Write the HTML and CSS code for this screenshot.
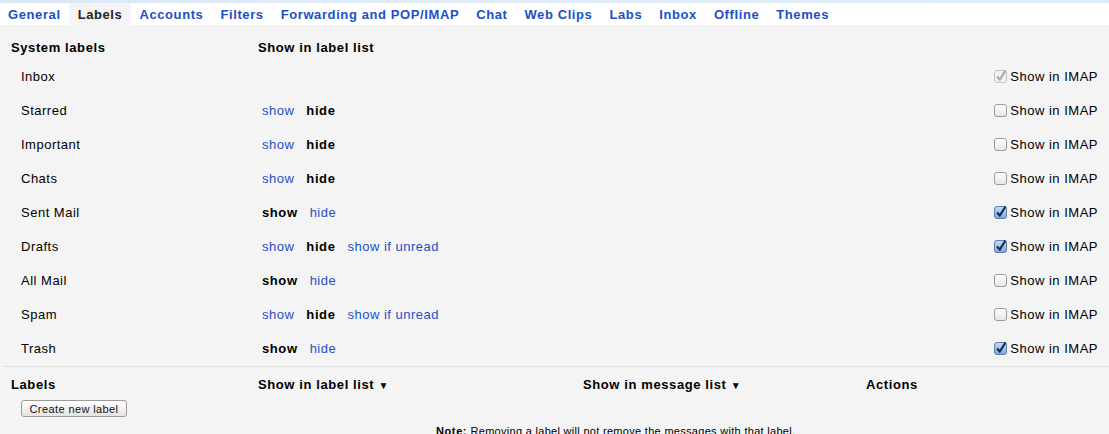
FILE: index.html
```html
<!DOCTYPE html>
<html>
<head>
<meta charset="utf-8">
<link rel="stylesheet" href="styles.css">
</head>
<body>
<div class="stripe"></div>
<nav class="tabs">
  <a class="tab">General</a>
  <a class="tab active">Labels</a>
  <a class="tab">Accounts</a>
  <a class="tab">Filters</a>
  <a class="tab">Forwarding and POP/IMAP</a>
  <a class="tab">Chat</a>
  <a class="tab">Web Clips</a>
  <a class="tab">Labs</a>
  <a class="tab">Inbox</a>
  <a class="tab">Offline</a>
  <a class="tab">Themes</a>
</nav>
<main class="content">
  <table class="sys">
    <colgroup><col class="c1"><col class="c2"><col class="c3"></colgroup>
    <tr class="head">
      <th>System labels</th>
      <th>Show in label list</th>
      <th></th>
    </tr>
    <tr>
      <td class="name">Inbox</td>
      <td class="opts"></td>
      <td class="imap"><span class="cb disabled"><svg width="14" height="14" viewBox="0 0 14 14"><rect x="0.5" y="1.5" width="12" height="12" rx="2.5" fill="#f2f2f2" stroke="#c4c4c4"/><path d="M3 7.5 L5.8 10.5 L11.5 1.5" fill="none" stroke="#a9a9a9" stroke-width="2.2"/></svg></span>Show in IMAP</td>
    </tr>
    <tr>
      <td class="name">Starred</td>
      <td class="opts"><a class="lnk">show</a><b class="cur">hide</b></td>
      <td class="imap"><span class="cb"><svg width="14" height="14" viewBox="0 0 14 14"><defs><linearGradient id="g1" x1="0" y1="0" x2="0" y2="1"><stop offset="0" stop-color="#ffffff"/><stop offset="1" stop-color="#e6e6e6"/></linearGradient></defs><rect x="0.5" y="1.5" width="12" height="12" rx="2.5" fill="url(#g1)" stroke="#9a9a9a"/></svg></span>Show in IMAP</td>
    </tr>
    <tr>
      <td class="name">Important</td>
      <td class="opts"><a class="lnk">show</a><b class="cur">hide</b></td>
      <td class="imap"><span class="cb"><svg width="14" height="14" viewBox="0 0 14 14"><rect x="0.5" y="1.5" width="12" height="12" rx="2.5" fill="url(#g1)" stroke="#9a9a9a"/></svg></span>Show in IMAP</td>
    </tr>
    <tr>
      <td class="name">Chats</td>
      <td class="opts"><a class="lnk">show</a><b class="cur">hide</b></td>
      <td class="imap"><span class="cb"><svg width="14" height="14" viewBox="0 0 14 14"><rect x="0.5" y="1.5" width="12" height="12" rx="2.5" fill="url(#g1)" stroke="#9a9a9a"/></svg></span>Show in IMAP</td>
    </tr>
    <tr>
      <td class="name">Sent Mail</td>
      <td class="opts"><b class="cur">show</b><a class="lnk">hide</a></td>
      <td class="imap"><span class="cb"><svg width="14" height="14" viewBox="0 0 14 14"><defs><linearGradient id="g2" x1="0" y1="0" x2="0" y2="1"><stop offset="0" stop-color="#c9dcf5"/><stop offset="1" stop-color="#7fa6dc"/></linearGradient></defs><rect x="0.5" y="1.5" width="12" height="12" rx="2.5" fill="url(#g2)" stroke="#5b7fae"/><path d="M3 7.5 L5.8 10.5 L11.5 1.5" fill="none" stroke="#1b2a4a" stroke-width="2.2"/></svg></span>Show in IMAP</td>
    </tr>
    <tr>
      <td class="name">Drafts</td>
      <td class="opts"><a class="lnk">show</a><b class="cur">hide</b><a class="lnk">show if unread</a></td>
      <td class="imap"><span class="cb"><svg width="14" height="14" viewBox="0 0 14 14"><rect x="0.5" y="1.5" width="12" height="12" rx="2.5" fill="url(#g2)" stroke="#5b7fae"/><path d="M3 7.5 L5.8 10.5 L11.5 1.5" fill="none" stroke="#1b2a4a" stroke-width="2.2"/></svg></span>Show in IMAP</td>
    </tr>
    <tr>
      <td class="name">All Mail</td>
      <td class="opts"><b class="cur">show</b><a class="lnk">hide</a></td>
      <td class="imap"><span class="cb"><svg width="14" height="14" viewBox="0 0 14 14"><rect x="0.5" y="1.5" width="12" height="12" rx="2.5" fill="url(#g1)" stroke="#9a9a9a"/></svg></span>Show in IMAP</td>
    </tr>
    <tr>
      <td class="name">Spam</td>
      <td class="opts"><a class="lnk">show</a><b class="cur">hide</b><a class="lnk">show if unread</a></td>
      <td class="imap"><span class="cb"><svg width="14" height="14" viewBox="0 0 14 14"><rect x="0.5" y="1.5" width="12" height="12" rx="2.5" fill="url(#g1)" stroke="#9a9a9a"/></svg></span>Show in IMAP</td>
    </tr>
    <tr>
      <td class="name">Trash</td>
      <td class="opts"><b class="cur">show</b><a class="lnk">hide</a></td>
      <td class="imap"><span class="cb"><svg width="14" height="14" viewBox="0 0 14 14"><rect x="0.5" y="1.5" width="12" height="12" rx="2.5" fill="url(#g2)" stroke="#5b7fae"/><path d="M3 7.5 L5.8 10.5 L11.5 1.5" fill="none" stroke="#1b2a4a" stroke-width="2.2"/></svg></span>Show in IMAP</td>
    </tr>
  </table>
  <section class="user">
    <div class="uhead">
      <span class="h1">Labels</span>
      <span class="h2">Show in label list <span class="arr">▼</span></span>
      <span class="h3">Show in message list <span class="arr">▼</span></span>
      <span class="h4">Actions</span>
    </div>
    <div class="btnrow"><button class="btn">Create new label</button></div>
    <p class="note"><b>Note:</b> Removing a label will not remove the messages with that label.</p>
  </section>
</main>
</body>
</html>
```

FILE: styles.css
```css
html, body {
  margin: 0;
  padding: 0;
  background: #f4f4f4;
  font-family: "Liberation Sans", Arial, sans-serif;
  font-size: 13px;
  letter-spacing: 0.5px;
  color: #000;
  overflow: hidden;
}
b, th, .tab, .uhead { letter-spacing: 0.6px; }
.stripe {
  height: 3px;
  background: linear-gradient(to right, #dbe9f6, #e3eef8 60%, #dcebf7);
}
.tabs {
  display: flex;
  background: #fff;
  height: 22px;
  align-items: stretch;
}
.tab {
  display: flex;
  align-items: center;
  padding: 1px 8.5px 0 8.5px;
  font-weight: bold;
  color: #1b50c8;
  white-space: nowrap;
}
.tab:first-child { padding-left: 8px; }
.tab.active {
  background: #f4f4f4;
  color: #222;
}
.content {
  padding: 0 0 0 3px;
}
.sys {
  border-collapse: collapse;
  width: 100%;
}
.c1 { width: 247px; }
.c3 { width: 300px; }
.sys th {
  text-align: left;
  font-weight: bold;
  height: 35px;
  padding: 0 0 4px 8px;
  vertical-align: bottom;
  line-height: 16px;
  box-sizing: border-box;
}
.sys td {
  height: 34px;
  padding: 0;
  line-height: 16px;
  vertical-align: middle;
}
.name { padding-left: 18px !important; }
.opts { padding-left: 12px !important; white-space: nowrap; }
.opts > * { margin-right: 12px; }
.lnk { color: #1b50c8; }
.cur { font-weight: bold; }
.imap {
  text-align: right;
  padding-right: 11px !important;
  white-space: nowrap;
}
.cb {
  display: inline-block;
  vertical-align: -2px;
  margin-right: 2px;
  width: 14px;
  height: 14px;
}
.cb svg { display: block; }
.user {
  border-top: 1px solid #e2e2e2;
}
.uhead {
  display: flex;
  font-weight: bold;
  padding-top: 10px;
  line-height: 16px;
}
.h1 { width: 247px; padding-left: 8px; box-sizing: border-box; }
.h2 { width: 325px; padding-left: 8px; box-sizing: border-box; }
.h3 { width: 283px; padding-left: 8px; box-sizing: border-box; }
.h4 { padding-left: 8px; }
.arr { font-size: 10px; }
.btnrow {
  padding: 6px 0 0 18px;
}
.btn {
  font-family: "Liberation Sans", Arial, sans-serif;
  font-size: 11px;
  letter-spacing: 0.4px;
  height: 17px;
  width: 106px;
  padding: 0;
  border: 1px solid #9a9a9a;
  border-radius: 3px;
  background: linear-gradient(#ffffff, #e4e4e4);
  color: #111;
  display: block;
}
.note {
  margin: 8px 0 0 433px;
  font-size: 11px;
  letter-spacing: 0.3px;
}
```
